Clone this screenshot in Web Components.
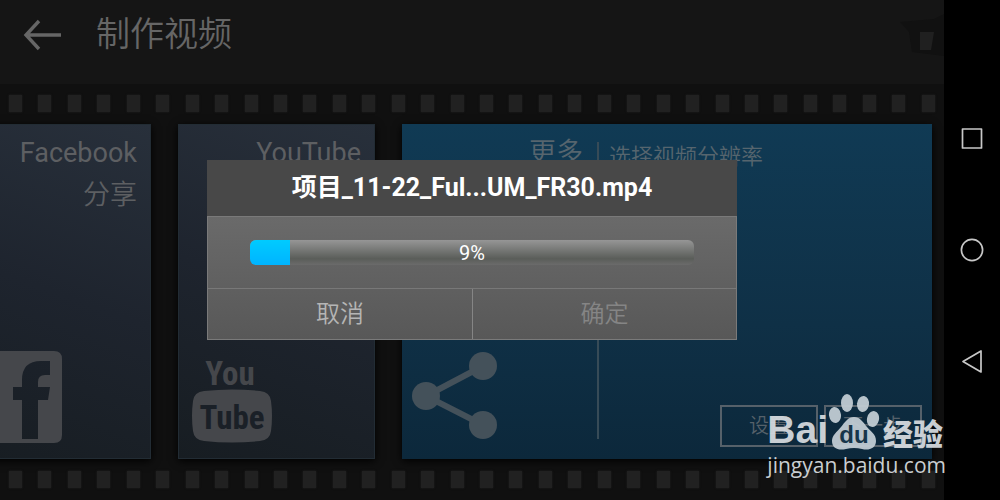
<!DOCTYPE html>
<html lang="zh-CN">
<head>
<meta charset="utf-8">
<meta name="viewport" content="width=device-width, initial-scale=1">
<title>制作视频</title>
<style>
html, body { margin: 0; background: #000; }
body { font-family: Roboto, "Noto Sans CJK SC", sans-serif; color: #646464; }
</style>
</head>
<body>
<phone-screen>
  <app-bar heading="制作视频"></app-bar>
  <film-strip></film-strip>
  <share-deck>
    <share-card label="Facebook" note="分享">
      <svg width="92" height="92" viewBox="0 0 92 92" aria-hidden="true"><path fill="#45474b" fill-rule="evenodd" d="M8 0H84Q92 0 92 8V84Q92 92 84 92H8Q0 92 0 84V8Q0 0 8 0ZM52 88H68V49H78L80 36H68V31Q68 24 75 24H80V10H71Q52 10 52 29V36H43V49H52Z"/></svg>
    </share-card>
    <share-card label="YouTube">
      <svg width="82" height="92" viewBox="0 0 82 92" aria-hidden="true">
        <path fill="#45474b" d="M11 40Q39 37 67 40Q77 41 78 50Q80 65 78 80Q77 89 67 90Q39 93 11 90Q1 89 0 80Q-2 65 0 50Q1 41 11 40Z"/>
        <g font-family="'Roboto Condensed','Open Sans Condensed',Roboto,sans-serif" font-weight="700" font-size="33" text-anchor="middle"><text x="37" y="34" fill="#45474b">You</text><text x="39" y="78" fill="#1a2027">Tube</text></g>
      </svg>
    </share-card>
    <more-card></more-card>
  </share-deck>
  <film-strip></film-strip>
  <progress-dialog slot="dialog" heading="项目_11-22_Ful...UM_FR30.mp4"></progress-dialog>
  <nav-keys slot="keys"></nav-keys>
  <site-mark slot="mark"></site-mark>
</phone-screen>

<script>
const define = (name, html) => customElements.define(name, class extends HTMLElement {
  constructor() {
    super();
    this.attachShadow({ mode: 'open' }).innerHTML = html;
  }
  connectedCallback() {
    for (const node of this.shadowRoot.querySelectorAll('[data-text]'))
      node.textContent = this.getAttribute(node.dataset.text) || '';
  }
});

define('phone-screen', `<style>
:host { display: grid; grid-template-columns: minmax(0, 1fr) 56px; min-height: 100vh; position: relative; overflow: hidden; background: #000; }
main { position: relative; display: flex; flex-direction: column; background: #101010; overflow: hidden; }
.overlay { position: absolute; inset: 0; display: grid; place-items: center; }
.mark { position: absolute; right: 54px; bottom: 20px; }
</style><main><slot></slot><div class="overlay"><slot name="dialog"></slot></div></main><slot name="keys"></slot><div class="mark"><slot name="mark"></slot></div>`);

define('app-bar', `<style>
:host { display: flex; align-items: center; gap: 32px; height: 68px; padding: 0 0 16px 20px; background: #151515; position: relative; }
button { border: 0; padding: 0; background: none; width: 44px; height: 44px; display: grid; place-items: center; }
h1 { margin: 0; font-size: 34px; line-height: 48px; font-weight: 350; color: #666; }
.corner { position: absolute; right: 0; top: 14px; }
</style><button aria-label="返回"><svg width="44" height="44" viewBox="0 0 44 44" fill="none" stroke="#666" stroke-width="3.4"><path d="M19 9L6 23L19 37M6 23H41"/></svg></button><h1 data-text="heading"></h1>
<svg class="corner" width="44" height="42" viewBox="0 0 44 42"><path fill="#111" d="M0 8L34 5L44 0V42L12 38L9 18Z"/><path fill="#202020" d="M20 18H34L31 36H20Z"/></svg>`);

define('film-strip', `<style>
:host { display: flex; justify-content: space-between; padding: 11px 9px 12px; }
i { width: 13px; height: 17px; background: #212121; box-shadow: 0 0 2px #212121; }
</style>${'<i></i>'.repeat(32)}`);

define('share-deck', `<style>
:host { flex: 1; display: grid; grid-template-columns: 196fr 197fr 530fr; gap: 27px; margin: 0 12px 1px -45px; }
</style><slot></slot>`);

define('share-card', `<style>
:host { display: flex; flex-direction: column; justify-content: space-between; padding: 7px 13px 15px 14px; background: linear-gradient(200deg, #28303b, #1e242e 50%, #171d22); box-shadow: 0 2px 8px #000; border: 1px solid #222c34; box-sizing: border-box; }
p { margin: 0; text-align: right; font-size: 27px; line-height: 42px; font-weight: 400; color: #5d5f62; }
.note { font-weight: 350; }
::slotted(svg) { display: block; overflow: visible; }
</style><div><p data-text="label"></p><p class="note" data-text="note"></p></div><slot></slot>`);

define('more-card', `<style>
:host { display: grid; grid-template-columns: 197fr 333fr; background: linear-gradient(#103a54, #0f3046 60%, #0c283b); box-shadow: 0 2px 8px #000; }
.lead { display: flex; flex-direction: column; justify-content: space-between; margin: 18px 0 20px; padding: 0 14px 0 10px; border-right: 2px solid #374b57; }
h2 { margin: -8px 0 0; text-align: right; font-size: 27px; line-height: 38px; font-weight: 350; color: #56656e; }
svg { display: block; }
.options { display: flex; flex-direction: column; justify-content: space-between; padding: 17px 10px 12px; }
p { margin: 0; font-size: 22px; line-height: 32px; font-weight: 350; color: #56656e; }
.row { display: flex; justify-content: flex-end; gap: 6px; }
button { width: 98px; height: 42px; padding: 0; border: 2px solid #56616a; background: none; color: #56616a; font: 350 20px/30px Roboto, "Noto Sans CJK SC", sans-serif; }
</style><div class="lead"><h2>更多</h2><svg width="88" height="88" viewBox="0 0 88 88" fill="#44515a" aria-hidden="true"><path fill="none" stroke="#44515a" stroke-width="6" d="M71 15L14 45L71 74"/><circle cx="14" cy="45" r="14"/><circle cx="71" cy="15" r="14"/><circle cx="71" cy="74" r="14"/></svg></div>
<div class="options"><p>选择视频分辨率</p><div class="row"><button>设置</button><button>下一步</button></div></div>`);

define('progress-dialog', `<style>
:host { display: block; width: 530px; max-width: 100%; }
h2 { margin: 0; background: #484848; color: #fff; text-align: center; font-size: 25px; line-height: 56px; font-weight: 700; }
.box { border: 1px solid #7a7a7a; background: linear-gradient(#6a6a6a, #585858); }
.body { padding: 23px 42px; }
.bar { position: relative; height: 25px; border-radius: 6px; overflow: hidden; background: linear-gradient(#969696, #5a5d59 75%, #6b6b6b); text-align: center; font-size: 20px; line-height: 26px; color: #fff; }
.fill { position: absolute; inset: 0 auto 0 0; width: 9%; background: linear-gradient(#00cbff, #00b4ff); }
.bar span { position: relative; }
.actions { display: grid; grid-template-columns: 1fr 1fr; border-top: 1px solid #787878; }
button { height: 50px; padding: 0; border: 0; background: none; color: #b5b5b5; font: 350 24px/34px Roboto, "Noto Sans CJK SC", sans-serif; }
button + button { border-left: 1px solid #858585; }
button:disabled { color: #858585; }
</style><section role="dialog" aria-labelledby="t"><h2 id="t" data-text="heading"></h2><div class="box"><div class="body"><div class="bar" role="progressbar" aria-label="进度" aria-valuenow="9" aria-valuemin="0" aria-valuemax="100"><div class="fill"></div><span>9%</span></div></div><div class="actions"><button>取消</button><button disabled>确定</button></div></div></section>`);

define('nav-keys', `<style>
:host { display: flex; flex-direction: column; align-items: center; justify-content: center; gap: 79px; background: #000; }
button { border: 0; padding: 0; background: none; width: 32px; height: 32px; }
svg { display: block; fill: none; stroke: #c8c8c8; stroke-width: 1.7; stroke-linejoin: round; }
</style><button aria-label="最近"><svg width="32" height="32"><rect x="6.500" y="6" width="19" height="19"/></svg></button><button aria-label="主页"><svg width="32" height="32"><circle cx="16" cy="16" r="10.600"/></svg></button><button aria-label="后退"><svg width="32" height="32"><path d="M25 6V27L7 16.500Z"/></svg></button>`);

define('site-mark', `<style>
:host { display: block; color: #d5dade; opacity: .94; }
.logo { display: flex; align-items: flex-end; height: 56px; }
.bai { font: 700 39px/40px "Liberation Sans", sans-serif; }
.cn { font: 900 30px/36px "Noto Sans CJK SC", sans-serif; padding-left: 3px; }
svg { display: block; }
.url { font: 400 21px/30px "Open Sans", sans-serif; }
</style><div class="logo"><span class="bai">Bai</span><svg width="52" height="56" viewBox="0 0 52 56"><g fill="#c2cdd4"><ellipse cx="7" cy="21" rx="6" ry="8" transform="rotate(-8 7 21)"/><ellipse cx="19" cy="9" rx="6" ry="9"/><ellipse cx="35" cy="10" rx="6" ry="8" transform="rotate(8 35 10)"/><ellipse cx="45" cy="25" rx="6" ry="8" transform="rotate(12 45 25)"/><path d="M26 23C32 23 35 28 39 33C43 38 48 40 48 47C48 54 41 57 34 55Q26 53 18 55C10 57 4 54 4 47C4 41 9 38 13 33C17 28 20 23 26 23Z"/></g><text x="26" y="49" text-anchor="middle" font-family="Liberation Sans" font-size="24" font-weight="700" fill="#18374b">du</text></svg><span class="cn">经验</span></div><div class="url">jingyan.baidu.com</div>`);
</script>
</body>
</html>
